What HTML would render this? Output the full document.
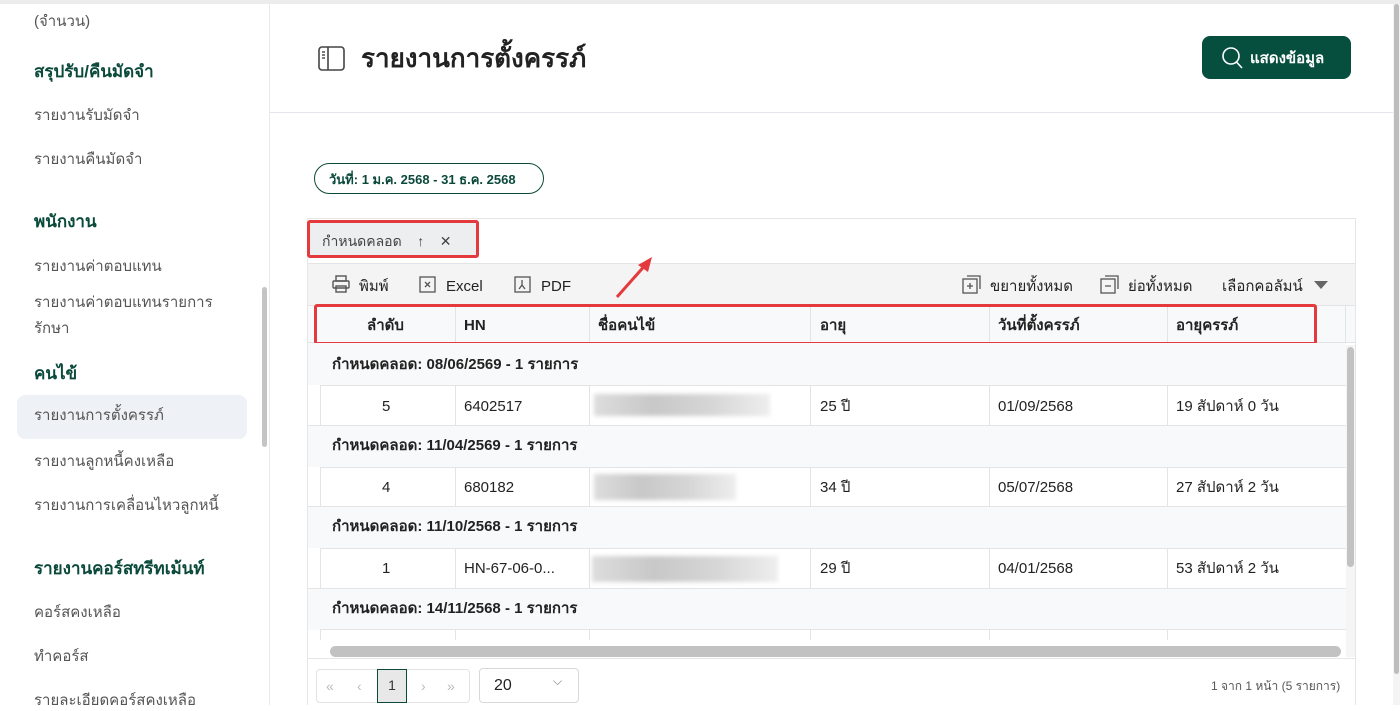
<!DOCTYPE html>
<html><head><meta charset="utf-8"><style>
*{box-sizing:border-box;margin:0;padding:0}
body{width:1400px;height:705px;overflow:hidden;background:#fff;font-family:"Liberation Sans","Noto Sans CJK SC",sans-serif;color:#333;position:relative}
.abs{position:absolute}
.topline{left:0;top:0;width:1400px;height:4px;background:#ececec}
.side{left:0;top:4px;width:270px;height:701px;border-right:1px solid #e8e8ee}
.side div{position:absolute;left:34px;font-size:15px;color:#555;line-height:20px;margin-top:2px}
.side .h{font-weight:bold;color:#0b4a3a;font-size:17px}
.tbl{left:307px;top:218px;width:1049px;height:487px;border:1px solid #e6e6e6;border-bottom:none}
.cell{position:absolute;font-size:15px;color:#222;line-height:20px;height:20px;white-space:nowrap;margin-top:2px}
.vl{position:absolute;width:1px;background:#e4e4e4}
.blur{position:absolute;height:22px;background:linear-gradient(90deg,#ddd,#c8c8c8,#d6d6d6,#eee);filter:blur(2px)}
</style></head><body>
<div class="abs topline"></div>
<div class="abs side">
<div style="top:6px">(จำนวน)</div>
<div class="h" style="top:56px">สรุปรับ/คืนมัดจำ</div>
<div style="top:100px">รายงานรับมัดจำ</div>
<div style="top:144px">รายงานคืนมัดจำ</div>
<div class="h" style="top:206px">พนักงาน</div>
<div style="top:251px">รายงานค่าตอบแทน</div>
<div style="top:284px;line-height:26px">รายงานค่าตอบแทนรายการ<br>รักษา</div>
<div class="h" style="top:358px">คนไข้</div>
<div style="top:389px;left:17px;width:230px;height:44px;background:#eef1f5;border-radius:8px;padding:11px 17px;color:#555">รายงานการตั้งครรภ์</div>
<div style="top:446px">รายงานลูกหนี้คงเหลือ</div>
<div style="top:490px">รายงานการเคลื่อนไหวลูกหนี้</div>
<div class="h" style="top:553px">รายงานคอร์สทรีทเม้นท์</div>
<div style="top:597px">คอร์สคงเหลือ</div>
<div style="top:641px">ทำคอร์ส</div>
<div style="top:685px">รายละเอียดคอร์สคงเหลือ</div>
<span style="position:absolute;left:262px;top:283px;width:5px;height:160px;background:#c4c4c4;border-radius:3px"></span>
</div>
<div class="abs" style="left:270px;top:112px;width:1123px;height:1px;background:#e3e6ee"></div>
<div class="abs" style="left:1393px;top:4px;width:7px;height:701px;background:#f4f4f4"><div style="margin:0 1px;height:670px;background:#bdbdbd;border-radius:3px"></div></div>
<svg class="abs" style="left:318px;top:46px" width="28" height="26" viewBox="0 0 28 26"><rect x="1" y="1" width="25" height="23" rx="3" fill="none" stroke="#444" stroke-width="1.6"/><line x1="10" y1="1" x2="10" y2="24" stroke="#444" stroke-width="1.6"/><line x1="4" y1="6" x2="7" y2="6" stroke="#444" stroke-width="1.4"/><line x1="4" y1="9" x2="7" y2="9" stroke="#444" stroke-width="1.4"/><line x1="4" y1="12" x2="7" y2="12" stroke="#444" stroke-width="1.4"/></svg>
<div class="abs" style="left:361px;top:41px;font-size:26px;font-weight:bold;color:#222;line-height:34px">รายงานการตั้งครรภ์</div>
<div class="abs" style="left:1202px;top:36px;width:149px;height:43px;background:#064f3e;border-radius:8px;color:#fff;font-weight:bold;font-size:15px;padding:0 0 0 48px;line-height:45px">แสดงข้อมูล</div>
<svg class="abs" style="left:1221px;top:46px" width="24" height="24" viewBox="0 0 24 24"><circle cx="10" cy="10" r="8" fill="none" stroke="#fff" stroke-width="1.6"/><line x1="15.5" y1="16" x2="21" y2="22" stroke="#fff" stroke-width="1.6"/></svg>
<div class="abs" style="left:314px;top:163px;width:230px;height:31px;border:1.5px solid #0b4a3a;border-radius:16px;font-size:13px;font-weight:bold;color:#0b4a3a;padding:0 0 0 14px;line-height:31px">วันที่: 1 ม.ค. 2568 - 31 ธ.ค. 2568</div>
<div class="abs tbl">
<div style="position:absolute;left:0;top:44px;width:1047px;height:42px;background:#f4f4f5;border-top:1px solid #e4e4e4"></div>
<div style="position:absolute;left:0;top:86px;width:1047px;height:38px;background:#f8f9fa;border-top:1px solid #e4e4e4;border-bottom:1px solid #e4e4e4"></div>
<div style="position:absolute;left:0;top:4px;width:168px;height:34px;background:#eceef0;font-size:14px;color:#444;padding:0 0 0 14px;line-height:36px">กำหนดคลอด &nbsp;&nbsp; ↑ &nbsp;&nbsp; ✕</div>
</div>
<div class="abs" style="left:307px;top:220px;width:172px;height:38px;border:3px solid #e43a3e;border-radius:3px"></div>
<svg class="abs" style="left:331px;top:274px" width="20" height="20" viewBox="0 0 20 20" fill="none" stroke="#555" stroke-width="1.4"><rect x="5" y="2" width="10" height="5"/><rect x="2" y="7" width="16" height="7" rx="1"/><rect x="5" y="12" width="10" height="6"/></svg>
<div class="abs cell" style="left:359px;top:275px">พิมพ์</div>
<svg class="abs" style="left:419px;top:276px" width="18" height="18" viewBox="0 0 18 18" fill="none" stroke="#555" stroke-width="1.3"><rect x="1" y="1" width="15" height="15"/><path d="M6 6l5 5M11 6l-5 5"/></svg>
<div class="abs cell" style="left:446px;top:275px">Excel</div>
<svg class="abs" style="left:514px;top:276px" width="18" height="18" viewBox="0 0 18 18" fill="none" stroke="#555" stroke-width="1.3"><rect x="1" y="1" width="15" height="15"/><path d="M8 4v5l-3 4M8 9l3 4"/></svg>
<div class="abs cell" style="left:541px;top:275px">PDF</div>
<svg class="abs" style="left:962px;top:275px" width="20" height="20" viewBox="0 0 20 20" fill="none" stroke="#555" stroke-width="1.3"><rect x="1" y="4" width="14" height="14"/><path d="M5 1h13v13M8 8v6M5 11h6"/></svg>
<div class="abs cell" style="left:990px;top:275px">ขยายทั้งหมด</div>
<svg class="abs" style="left:1100px;top:275px" width="20" height="20" viewBox="0 0 20 20" fill="none" stroke="#555" stroke-width="1.3"><rect x="1" y="4" width="14" height="14"/><path d="M5 1h13v13M5 11h6"/></svg>
<div class="abs cell" style="left:1128px;top:275px">ย่อทั้งหมด</div>
<div class="abs cell" style="left:1222px;top:275px">เลือกคอลัมน์</div>
<div class="abs" style="left:1314px;top:281px;border-left:7px solid transparent;border-right:7px solid transparent;border-top:8px solid #666"></div>
<div class="abs vl" style="left:455px;top:305px;height:335px"></div>
<div class="abs vl" style="left:589px;top:305px;height:335px"></div>
<div class="abs vl" style="left:810px;top:305px;height:335px"></div>
<div class="abs vl" style="left:989px;top:305px;height:335px"></div>
<div class="abs vl" style="left:1167px;top:305px;height:335px"></div>
<div class="abs vl" style="left:1345px;top:305px;height:38px"></div>
<div class="abs cell" style="left:367px;top:314px;font-weight:bold">ลำดับ</div>
<div class="abs cell" style="left:464px;top:314px;font-weight:bold">HN</div>
<div class="abs cell" style="left:598px;top:314px;font-weight:bold">ชื่อคนไข้</div>
<div class="abs cell" style="left:820px;top:314px;font-weight:bold">อายุ</div>
<div class="abs cell" style="left:998px;top:314px;font-weight:bold">วันที่ตั้งครรภ์</div>
<div class="abs cell" style="left:1176px;top:314px;font-weight:bold">อายุครรภ์</div>
<div class="abs" style="left:314px;top:304px;width:1003px;height:41px;border:3px solid #e43a3e;border-radius:3px"></div>
<div class="abs" style="left:308px;top:343px;width:1038px;height:42px;background:#f8f9fa"></div>
<div class="abs" style="left:308px;top:425px;width:1038px;height:42px;background:#f8f9fa;border-top:1px solid #e4e4e4"></div>
<div class="abs" style="left:308px;top:506px;width:1038px;height:42px;background:#f8f9fa;border-top:1px solid #e4e4e4"></div>
<div class="abs" style="left:308px;top:588px;width:1038px;height:42px;background:#f8f9fa;border-top:1px solid #e4e4e4"></div>
<div class="abs" style="left:320px;top:385px;width:1026px;height:1px;background:#e4e4e4"></div>
<div class="abs" style="left:320px;top:467px;width:1026px;height:1px;background:#e4e4e4"></div>
<div class="abs" style="left:320px;top:548px;width:1026px;height:1px;background:#e4e4e4"></div>
<div class="abs" style="left:320px;top:629px;width:1026px;height:1px;background:#e4e4e4"></div>
<div class="abs vl" style="left:320px;top:385px;height:40px"></div>
<div class="abs vl" style="left:320px;top:467px;height:39px"></div>
<div class="abs vl" style="left:320px;top:548px;height:40px"></div>
<div class="abs vl" style="left:320px;top:629px;height:15px"></div>
<div class="abs cell" style="left:332px;top:353px;font-weight:bold">กำหนดคลอด: 08/06/2569 - 1 รายการ</div>
<div class="abs cell" style="left:332px;top:434px;font-weight:bold">กำหนดคลอด: 11/04/2569 - 1 รายการ</div>
<div class="abs cell" style="left:332px;top:515px;font-weight:bold">กำหนดคลอด: 11/10/2568 - 1 รายการ</div>
<div class="abs cell" style="left:332px;top:597px;font-weight:bold">กำหนดคลอด: 14/11/2568 - 1 รายการ</div>
<div class="abs cell" style="left:382px;top:395px">5</div><div class="abs cell" style="left:464px;top:395px">6402517</div><div class="blur" style="left:594px;top:394px;width:176px"></div><div class="abs cell" style="left:820px;top:395px">25 ปี</div><div class="abs cell" style="left:998px;top:395px">01/09/2568</div><div class="abs cell" style="left:1176px;top:395px">19 สัปดาห์ 0 วัน</div>
<div class="abs cell" style="left:382px;top:476px">4</div><div class="abs cell" style="left:464px;top:476px">680182</div><div class="blur" style="left:594px;top:474px;width:142px;height:26px"></div><div class="abs cell" style="left:820px;top:476px">34 ปี</div><div class="abs cell" style="left:998px;top:476px">05/07/2568</div><div class="abs cell" style="left:1176px;top:476px">27 สัปดาห์ 2 วัน</div>
<div class="abs cell" style="left:382px;top:557px">1</div><div class="abs cell" style="left:464px;top:557px">HN-67-06-0...</div><div class="blur" style="left:592px;top:556px;width:186px;height:26px"></div><div class="abs cell" style="left:820px;top:557px">29 ปี</div><div class="abs cell" style="left:998px;top:557px">04/01/2568</div><div class="abs cell" style="left:1176px;top:557px">53 สัปดาห์ 2 วัน</div>
<div class="abs" style="left:308px;top:640px;width:1038px;height:17px;background:#fff"></div>
<div class="abs" style="left:330px;top:646px;width:1011px;height:11px;background:#c2c2c2;border-radius:6px"></div>
<div class="abs" style="left:1346px;top:345px;width:9px;height:312px;background:#f5f5f5"><div style="margin:2px 1px;height:220px;background:#c2c2c2;border-radius:4px"></div></div>
<div class="abs" style="left:307px;top:658px;width:1049px;height:1px;background:#e6e6e6"></div>
<div class="abs" style="left:316px;top:669px;width:154px;height:34px;border:1px solid #e3e3e3;border-radius:4px;color:#bbb;font-size:14px">
<span style="position:absolute;left:9px;top:8px">«</span><span style="position:absolute;left:40px;top:8px">‹</span><span style="position:absolute;left:60px;top:-1px;width:30px;height:34px;background:#e8e8e8;border:1px solid #0b4a3a;color:#333;text-align:center;padding-top:7px">1</span><span style="position:absolute;left:104px;top:8px">›</span><span style="position:absolute;left:130px;top:8px">»</span></div>
<div class="abs" style="left:479px;top:668px;width:100px;height:35px;border:1px solid #d8d8d8;border-radius:4px;font-size:16px;padding:8px 0 0 14px;color:#222">20<span style="position:absolute;left:73px;top:5px;font-size:12px;color:#777">⌵</span></div>
<div class="abs" style="left:1211px;top:678px;font-size:12px;color:#555;line-height:16px">1 จาก 1 หน้า (5 รายการ)</div>
<svg class="abs" style="left:612px;top:252px" width="46" height="50" viewBox="0 0 46 50"><line x1="5" y1="45" x2="36" y2="10" stroke="#e43a3e" stroke-width="3"/><polygon points="40,5 26,13 36,20" fill="#e43a3e"/></svg>
</body></html>
